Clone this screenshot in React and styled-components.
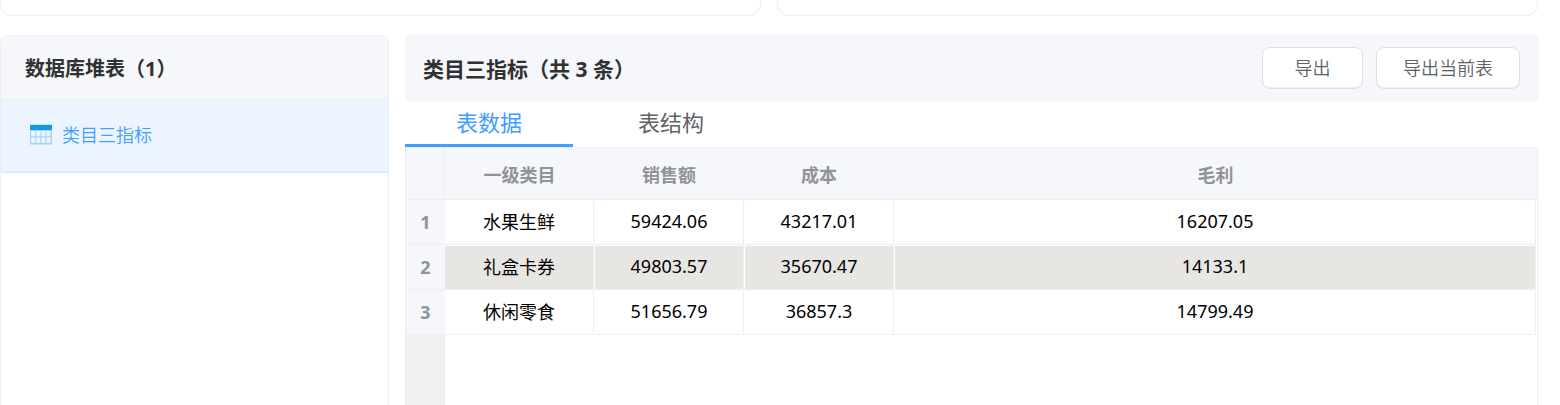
import React, { useState } from 'react';
import styled, { createGlobalStyle } from 'styled-components';

const GlobalStyle = createGlobalStyle`
  * {
    box-sizing: border-box;
  }

  body {
    margin: 0;
    background-color: #fff;
    color: #303133;
    font-family: "Noto Sans", "Noto Sans CJK SC", sans-serif;
    font-size: 18px;
  }

  button {
    font-family: inherit;
    cursor: pointer;
  }
`;

const Page = styled.div`
  min-height: 100vh;
  padding-right: 21px;
  display: flex;
  flex-direction: column;
`;

const CardRow = styled.div`
  display: grid;
  grid-template-columns: 1fr 1fr;
  gap: 16px;
  margin: 0 1px 19px 0;
`;

const Card = styled.div`
  height: 16px;
  border: 1px solid #ebeef5;
  border-top: none;
  border-radius: 0 0 12px 12px;
`;

const Content = styled.main`
  flex: 1;
  display: flex;
  gap: 16px;
`;

const Sidebar = styled.aside`
  flex: 0 0 389px;
  border: 1px solid #ebeef5;
  border-bottom: none;
  border-radius: 8px 8px 0 0;
`;

const SidebarTitle = styled.h2`
  height: 64px;
  margin: 0;
  padding: 0 24px;
  display: flex;
  align-items: center;
  background-color: #f5f7fa;
  border-bottom: 1px solid #ebeef5;
  font-size: 20px;
  font-weight: 700;
`;

const TableItem = styled.button`
  width: 100%;
  height: 73px;
  padding: 0 28px 3px;
  display: flex;
  align-items: center;
  gap: 9px;
  border: none;
  border-bottom: 2px solid #d9ecff;
  background-color: #ecf5ff;
  color: #409eff;
  font-size: 18px;
  font-weight: 350;
`;

const Panel = styled.section`
  flex: 1;
  min-width: 0;
  display: flex;
  flex-direction: column;
`;

const PanelHeader = styled.header`
  height: 66px;
  padding: 0 19px 0 18px;
  display: flex;
  align-items: center;
  justify-content: space-between;
  background-color: #f5f7fa;
`;

const PanelTitle = styled.h2`
  margin: 0;
  font-size: 21px;
  font-weight: 700;
`;

const Actions = styled.div`
  display: flex;
  gap: 13px;
`;

const Button = styled.button`
  min-width: 101px;
  height: 42px;
  padding: 0 26px 2px;
  border: 1px solid #dcdfe6;
  border-radius: 8px;
  background-color: #fff;
  box-shadow: inset 0 -1px 0 #eceef2;
  color: #606266;
  font-size: 18px;
  font-weight: 350;
`;

const Tabs = styled.div`
  height: 46px;
  display: flex;
`;

const Tab = styled.button`
  width: 168px;
  margin-right: 14px;
  padding: 0;
  border: none;
  border-bottom: 3px solid ${({ $active }) => ($active ? '#409eff' : 'transparent')};
  background: none;
  color: ${({ $active }) => ($active ? '#409eff' : '#606266')};
  font-size: 22px;
  line-height: 43px;
`;

const TableArea = styled.div`
  flex: 1;
  margin-right: 1px;
  display: flex;
  flex-direction: column;
  border: 1px solid #ebeef5;
  border-bottom: none;
`;

const Table = styled.table`
  width: 100%;
  table-layout: fixed;
  border-collapse: separate;
  border-spacing: 0;
`;

const Col = styled.col`
  width: ${({ $width }) => $width}px;
`;

const HeadCell = styled.th`
  height: 52px;
  padding: 0;
  border-bottom: 1px solid #ebeef5;
  background-color: #f5f7fa;
  color: #909399;
  font-weight: 700;

  &:first-child {
    border-right: 1px solid #ebeef5;
  }
`;

const IndexCell = styled.th`
  height: 45px;
  padding: 0;
  border-bottom: 1px solid #ebeef5;
  background-color: #f5f7fa;
  color: #909399;
  font-weight: 700;
`;

const Cell = styled.td`
  padding: 0 0 3px;
  border: 1px solid #ebeef5;
  border-top-color: #fff;
  border-left-color: #fff;
  background-color: ${({ $striped }) => ($striped ? '#e8e6e3' : '#fff')};
  color: #000;
  text-align: center;

  &:nth-child(2) {
    border-left: none;
  }
`;

const Gutter = styled.div`
  flex: 1;
  width: 39px;
  background-color: #f0f0f0;
`;

const columns = ['一级类目', '销售额', '成本', '毛利'];

const rows = [
  ['水果生鲜', '59424.06', '43217.01', '16207.05'],
  ['礼盒卡券', '49803.57', '35670.47', '14133.1'],
  ['休闲零食', '51656.79', '36857.3', '14799.49'],
];

const tabs = ['表数据', '表结构'];

function TableIcon() {
  return (
    <svg width="24" height="22" viewBox="0 0 24 22" aria-hidden="true">
      <rect x="1" y="1.5" width="22" height="20" fill="#a6d3f2" />
      <rect x="1" y="2" width="22" height="5" fill="#0f9be0" />
      {[8, 14.5].map((y) =>
        [2.2, 7.3, 12.4, 17.5].map((x) => (
          <rect key={`${x}-${y}`} x={x} y={y} width="4" height="5.3" fill="#ecf5ff" />
        ))
      )}
    </svg>
  );
}

function DataTable() {
  return (
    <TableArea>
      <Table>
        <colgroup>
          <Col $width={39} />
          <Col $width={149} />
          <Col $width={150} />
          <Col $width={150} />
          <col />
          <Col $width={1} />
        </colgroup>
        <thead>
          <tr>
            <HeadCell />
            {columns.map((name, i) => (
              <HeadCell key={name} scope="col" colSpan={i === columns.length - 1 ? 2 : 1}>
                {name}
              </HeadCell>
            ))}
          </tr>
        </thead>
        <tbody>
          {rows.map((row, i) => (
            <tr key={row[0]}>
              <IndexCell scope="row">{i + 1}</IndexCell>
              {row.map((value) => (
                <Cell key={value} $striped={i % 2 === 1}>{value}</Cell>
              ))}
            </tr>
          ))}
        </tbody>
      </Table>
      <Gutter />
    </TableArea>
  );
}

function App() {
  const [activeTab, setActiveTab] = useState(tabs[0]);

  return (
    <>
      <GlobalStyle />
      <Page>
        <CardRow>
          <Card />
          <Card />
        </CardRow>
        <Content>
          <Sidebar>
            <SidebarTitle>数据库堆表（1）</SidebarTitle>
            <TableItem>
              <TableIcon />
              类目三指标
            </TableItem>
          </Sidebar>
          <Panel>
            <PanelHeader>
              <PanelTitle>类目三指标（共 3 条）</PanelTitle>
              <Actions>
                <Button>导出</Button>
                <Button>导出当前表</Button>
              </Actions>
            </PanelHeader>
            <Tabs role="tablist">
              {tabs.map((tab) => (
                <Tab
                  key={tab}
                  role="tab"
                  aria-selected={tab === activeTab}
                  $active={tab === activeTab}
                  onClick={() => setActiveTab(tab)}
                >
                  {tab}
                </Tab>
              ))}
            </Tabs>
            <DataTable />
          </Panel>
        </Content>
      </Page>
    </>
  );
}

export default App;
